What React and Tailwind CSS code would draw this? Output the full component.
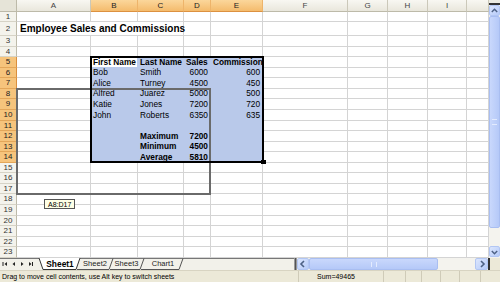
import React from 'react';

const COLW = ['w-[17px]','w-[74px]','w-[47px]','w-[46px]','w-[27px]','w-[52px]','w-[85px]','w-[40px]','w-[40px]','w-[39px]','w-[22px]'];
const LETTERS = ['', 'A','B','C','D','E','F','G','H','I',''];
const ROWH = {10:'h-[10px]',11:'h-[11px]',14:'h-[14px]'};
const HEIGHTS = [10,14,11,10,11,10,11,10,11,11,10,11,10,11,10,11,10,11,11,10,11,10,11];

const DATA = {
  A2: { t: 'Employee Sales and Commissions', title: true },
  B5: { t: 'First Name', b: true }, C5: { t: 'Last Name', b: true }, D5: { t: 'Sales', b: true }, E5: { t: 'Commission', b: true },
  B6: { t: 'Bob' }, C6: { t: 'Smith' }, D6: { t: '6000', r: true }, E6: { t: '600', r: true },
  B7: { t: 'Alice' }, C7: { t: 'Turney' }, D7: { t: '4500', r: true }, E7: { t: '450', r: true },
  B8: { t: 'Alfred' }, C8: { t: 'Juarez' }, D8: { t: '5000', r: true }, E8: { t: '500', r: true },
  B9: { t: 'Katie' }, C9: { t: 'Jones' }, D9: { t: '7200', r: true }, E9: { t: '720', r: true },
  B10: { t: 'John' }, C10: { t: 'Roberts' }, D10: { t: '6350', r: true }, E10: { t: '635', r: true },
  C12: { t: 'Maximum', b: true }, D12: { t: '7200', b: true, r: true },
  C13: { t: 'Minimum', b: true }, D13: { t: '4500', b: true, r: true },
  C14: { t: 'Average', b: true }, D14: { t: '5810', b: true, r: true },
};

function ColHeader({ ci }) {
  if (ci === 0) {
    return <div className={`${COLW[0]} shrink-0 h-full bg-[#e6e4d8] border-r border-b border-[#bdbaa9]`} />;
  }
  const sel = ci >= 2 && ci <= 5;
  return (
    <div
      className={`${COLW[ci]} shrink-0 h-full flex items-center justify-center text-[8px] leading-none border-r border-b ${
        sel
          ? 'bg-gradient-to-b from-[#fbd79b] to-[#f4bb6c] border-r-[#eeb46a] border-b-[#dc9140] text-[#222]'
          : 'bg-gradient-to-b from-[#f8f7f2] to-[#e9e7dc] border-r-[#cbc8b9] border-b-[#bdbaa9] text-[#444]'
      }`}
    >
      {LETTERS[ci]}
    </div>
  );
}

function Cell({ ci, row }) {
  if (ci === 0) {
    const sel = row >= 5 && row <= 14;
    return (
      <div
        className={`${COLW[0]} shrink-0 h-full flex items-center justify-center text-[8px] leading-none border-r border-b ${
          sel
            ? 'bg-[#f6c47c] border-r-[#d98f3e] border-b-[#e3a659] text-[#222]'
            : 'bg-[#f4f3ec] border-r-[#bdbaa9] border-b-[#d6d3c6] text-[#333]'
        }`}
      >
        {row}
      </div>
    );
  }
  const key = LETTERS[ci] + row;
  const d = DATA[key];
  const sel = ci >= 2 && ci <= 5 && row >= 5 && row <= 14;
  const active = ci === 2 && row === 5;
  let look = 'border-[#d4d4d4]';
  if (active) look = 'bg-white border-[#b9c9ea]';
  else if (sel) look = 'bg-[#b9c9ea] border-[#b9c9ea]';
  const noRight = row === 2 && (ci === 1 || ci === 2);
  return (
    <div
      className={`${COLW[ci]} shrink-0 h-full border-b ${noRight ? '' : 'border-r'} ${look} flex items-center ${
        d && d.r ? 'justify-end pr-[2px]' : d && d.title ? 'pl-[3px]' : 'pl-[2px]'
      } whitespace-nowrap leading-none text-black`}
    >
      {d ? (
        <span className={d.title ? 'text-[10px] font-bold relative z-10' : `text-[8.3px] ${d.b ? 'font-bold' : ''}`}>{d.t}</span>
      ) : null}
    </div>
  );
}

function Chevron({ dir }) {
  const paths = {
    up: 'M2 6 L5 3 L8 6',
    down: 'M2 4 L5 7 L8 4',
    left: 'M6 2 L3 5 L6 8',
    right: 'M4 2 L7 5 L4 8',
  };
  return (
    <svg width="10" height="10" viewBox="0 0 10 10">
      <path d={paths[dir]} fill="none" stroke="#4d6185" strokeWidth="1.6" />
    </svg>
  );
}

function ScrollBtn({ dir, className }) {
  return (
    <div className={`${className} shrink-0 flex items-center justify-center bg-gradient-to-br from-[#dce6fd] to-[#b6cbf9] border border-[#b2c6f3] rounded-[2px]`}>
      <Chevron dir={dir} />
    </div>
  );
}

function NavButtons() {
  return (
    <svg width="38" height="12" viewBox="0 0 38 12" className="shrink-0">
      <rect x="2.5" y="4" width="1" height="4" fill="#222" />
      <path d="M7 4 L4.5 6 L7 8 Z" fill="#222" />
      <path d="M15 4 L12.5 6 L15 8 Z" fill="#222" />
      <path d="M21 4 L23.5 6 L21 8 Z" fill="#222" />
      <path d="M29 4 L31.5 6 L29 8 Z" fill="#222" />
      <rect x="32" y="4" width="1" height="4" fill="#222" />
    </svg>
  );
}

function TabStrip() {
  return (
    <div className="relative w-[294px] h-full shrink-0 bg-[#f2f1ea]">
      <svg className="absolute inset-0" width="294" height="12" viewBox="0 0 294 12">
        <line x1="0" y1="0.5" x2="39" y2="0.5" stroke="#777" />
        <line x1="80" y1="0.5" x2="294" y2="0.5" stroke="#777" />
        <polygon points="39,0 43,11.5 76,11.5 80,0" fill="#ffffff" />
        <polyline points="39,0 43,11.5 76,11.5 80,0" fill="none" stroke="#333" strokeWidth="1" />
        <polyline points="77,11.5 109,11.5 113,0.5" fill="none" stroke="#555" strokeWidth="1" />
        <polyline points="110,11.5 140,11.5 144,0.5" fill="none" stroke="#555" strokeWidth="1" />
        <polyline points="141,11.5 179,11.5 183,0.5" fill="none" stroke="#555" strokeWidth="1" />
      </svg>
      <div className="relative flex items-center h-full leading-none whitespace-nowrap">
        <NavButtons />
        <div className="ml-[5px] w-[34px] shrink-0 flex justify-center text-[8.4px] font-bold text-black">Sheet1</div>
        <div className="ml-[3px] w-[30px] shrink-0 flex justify-center text-[7.5px] text-[#222]">Sheet2</div>
        <div className="ml-[2px] w-[29px] shrink-0 flex justify-center text-[7.5px] text-[#222]">Sheet3</div>
        <div className="ml-[6px] w-[32px] shrink-0 flex justify-center text-[7.5px] text-[#222]">Chart1</div>
      </div>
    </div>
  );
}

export default function App() {
  const rows = [];
  for (let r = 1; r <= 23; r++) rows.push(r);
  return (
    <div className="w-[500px] h-[282px] overflow-hidden flex flex-col bg-white" style={{ fontFamily: '"Liberation Sans", Arial, sans-serif' }}>
      <div className="flex h-[258px] shrink-0">
        <div className="relative w-[489px] h-full flex flex-col bg-white">
          <div className="flex h-[12px] shrink-0">
            {LETTERS.map((_, ci) => (
              <ColHeader key={ci} ci={ci} />
            ))}
          </div>
          {rows.map((r) => (
            <div key={r} className={`flex shrink-0 ${ROWH[HEIGHTS[r - 1]]}`}>
              {LETTERS.map((_, ci) => (
                <Cell key={ci} ci={ci} row={r} />
              ))}
            </div>
          ))}
          {/* drag outline A8:D17 */}
          <div className="absolute left-[16px] top-[88px] w-[195px] h-[107px] border-2 border-[#6a6a6a] pointer-events-none" />
          {/* selection B5:E14 */}
          <div className="absolute left-[90px] top-[56px] w-[174px] h-[107px] border-2 border-black pointer-events-none" />
          <div className="absolute left-[261px] top-[160px] w-[5px] h-[4px] bg-black" />
          {/* tooltip */}
          <div className="absolute left-[44px] top-[199px] h-[10px] px-[3px] flex items-center bg-[#ffffe6] border border-[#555] text-[7px] leading-none text-black">
            A8:D17
          </div>
        </div>
        <div className="w-[11px] h-full flex flex-col bg-[#f4f3ee]">
          <div className="h-[3px] shrink-0 bg-[#ecebe2]" />
          <div className="h-[2px] shrink-0 bg-[#333]" />
          <ScrollBtn dir="up" className="h-[11px] w-[11px]" />
          <div className="h-[212px] shrink-0 bg-gradient-to-r from-[#c9d8fc] to-[#b5c9f8] border border-[#a9bef1] rounded-[2px] flex items-center justify-center">
            <div className="w-[5px] h-[6px] border-y border-[#e3ebfe]" />
          </div>
          <div className="h-[18px] shrink-0 bg-[#f4f3ee]" />
          <ScrollBtn dir="down" className="h-[11px] w-[11px]" />
          <div className="flex-1" />
        </div>
      </div>
      <div className="flex h-[12px] shrink-0 bg-[#f2f1ea]">
        <TabStrip />
        <div className="w-[3px] h-full shrink-0 bg-[#555] border-x border-[#999]" />
        <ScrollBtn dir="left" className="h-full w-[12px]" />
        <div className="w-[129px] h-full shrink-0 bg-gradient-to-b from-[#c9d8fc] to-[#b5c9f8] border border-[#a9bef1] rounded-[2px] flex items-center justify-center">
          <div className="w-[6px] h-[5px] border-x border-[#e3ebfe]" />
        </div>
        <div className="w-[37px] h-full shrink-0 bg-[#f4f3ee]" />
        <ScrollBtn dir="right" className="h-full w-[13px]" />
        <div className="w-[2px] h-full shrink-0 bg-[#333]" />
        <div className="flex-1 bg-[#ece9d8]" />
      </div>
      <div className="flex h-[12px] shrink-0 bg-[#ece9d8] border-t border-[#d8d4c2] text-[7px] leading-none text-black">
        <div className="w-[298px] shrink-0 flex items-center pl-[2px] whitespace-nowrap">Drag to move cell contents, use Alt key to switch sheets</div>
        <div className="w-[85px] shrink-0 flex items-center pl-[18px] border-l border-[#cfcbb8] whitespace-nowrap">Sum=49465</div>
        <div className="w-[22px] shrink-0 border-l border-[#cfcbb8]" />
        <div className="w-[16px] shrink-0 border-l border-[#cfcbb8]" />
        <div className="w-[19px] shrink-0 border-l border-[#cfcbb8]" />
        <div className="w-[19px] shrink-0 border-l border-[#cfcbb8]" />
        <div className="w-[21px] shrink-0 border-l border-[#cfcbb8]" />
        <div className="flex-1 border-l border-[#cfcbb8]" />
      </div>
    </div>
  );
}
